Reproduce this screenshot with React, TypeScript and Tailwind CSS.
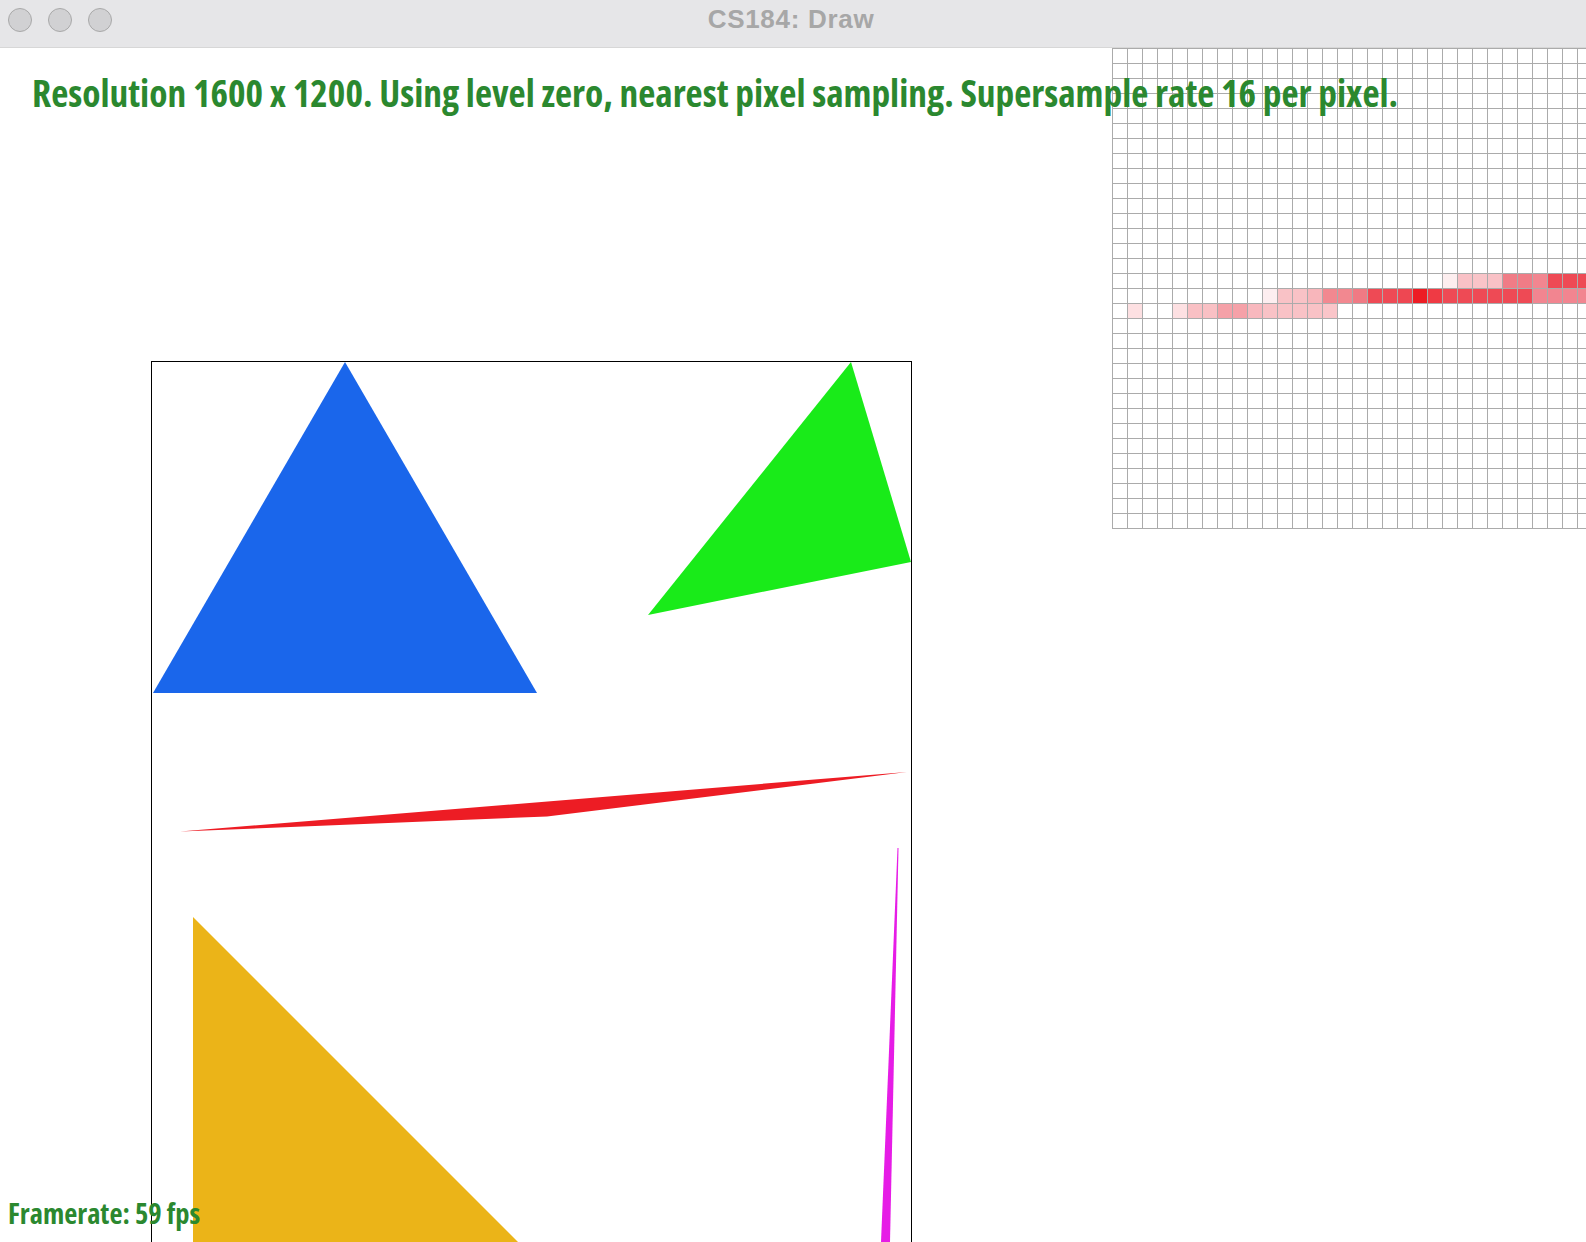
import React from 'react';

interface ZoomCell {
  row: number;
  col: number;
  color: string;
}

const CELL = 15;
const GRID_X = 1112;
const GRID_N = 32;

// samples shown in the zoomed pixel inspector (row, col, colour)
const zoomCells: ZoomCell[] = [
  { row: 15, col: 22, color: '#fdeeef' },
  { row: 15, col: 23, color: '#f9c1c6' },
  { row: 15, col: 24, color: '#f9c4c8' },
  { row: 15, col: 25, color: '#f9c1c6' },
  { row: 15, col: 26, color: '#f07c86' },
  { row: 15, col: 27, color: '#f07c86' },
  { row: 15, col: 28, color: '#f28690' },
  { row: 15, col: 29, color: '#ee4a55' },
  { row: 15, col: 30, color: '#ee4a55' },
  { row: 15, col: 31, color: '#ee4a55' },
  { row: 16, col: 10, color: '#fdeef0' },
  { row: 16, col: 11, color: '#f9c2c6' },
  { row: 16, col: 12, color: '#f9c2c6' },
  { row: 16, col: 13, color: '#f8b6bb' },
  { row: 16, col: 14, color: '#f28890' },
  { row: 16, col: 15, color: '#f28890' },
  { row: 16, col: 16, color: '#f07a84' },
  { row: 16, col: 17, color: '#ee4a55' },
  { row: 16, col: 18, color: '#ee4a55' },
  { row: 16, col: 19, color: '#ee4752' },
  { row: 16, col: 20, color: '#ed1c24' },
  { row: 16, col: 21, color: '#ef3a44' },
  { row: 16, col: 22, color: '#ee4a55' },
  { row: 16, col: 23, color: '#ee4a55' },
  { row: 16, col: 24, color: '#ee4a55' },
  { row: 16, col: 25, color: '#ee4a55' },
  { row: 16, col: 26, color: '#ee4a55' },
  { row: 16, col: 27, color: '#ee4a55' },
  { row: 16, col: 28, color: '#f28590' },
  { row: 16, col: 29, color: '#f28590' },
  { row: 16, col: 30, color: '#f28590' },
  { row: 16, col: 31, color: '#f28590' },
  { row: 17, col: 1, color: '#fde0e2' },
  { row: 17, col: 4, color: '#fde0e2' },
  { row: 17, col: 5, color: '#f9c0c4' },
  { row: 17, col: 6, color: '#f9c0c4' },
  { row: 17, col: 7, color: '#f5a1a8' },
  { row: 17, col: 8, color: '#f5a1a8' },
  { row: 17, col: 9, color: '#f8b8be' },
  { row: 17, col: 10, color: '#f9c2c6' },
  { row: 17, col: 11, color: '#f9c2c6' },
  { row: 17, col: 12, color: '#f9c2c6' },
  { row: 17, col: 13, color: '#f9c2c6' },
  { row: 17, col: 14, color: '#fac5c9' },
];

const TrafficLight = () => (
  <span className="block h-6 w-6 rounded-full border border-[#a9a9a9] bg-[#d1d1d3]" />
);

const DrawCanvas = () => {
  const lines = Array.from({ length: GRID_N + 1 }, (_, i) => i);
  return (
    <svg className="absolute inset-0" width={1586} height={1194} viewBox="0 0 1586 1194">
      {/* framebuffer outline */}
      <rect x={151.5} y={313.5} width={760} height={1000} fill="none" stroke="#000" strokeWidth={1} />

      <polygon points="345,314 153,645 537,645" fill="#1a66eb" />
      <polygon points="851,314 911,514 648,567" fill="#19eb19" />
      <polygon points="180,783.5 907,724 547,768.5" fill="#ed1c24" />
      <polygon points="193,869 193,1400 724,1400" fill="#ebb418" />
      <polygon points="897.5,800 898.5,800 890,1194 881,1194" fill="#e61ce6" />

      {/* zoom inspector */}
      <rect x={GRID_X} y={0} width={CELL * GRID_N} height={CELL * GRID_N} fill="#fff" />
      {zoomCells.map((c) => (
        <rect
          key={`${c.row}-${c.col}`}
          x={GRID_X + c.col * CELL}
          y={c.row * CELL}
          width={CELL}
          height={CELL}
          fill={c.color}
        />
      ))}
      {lines.map((i) => (
        <line
          key={`v${i}`}
          x1={GRID_X + i * CELL + 0.5}
          x2={GRID_X + i * CELL + 0.5}
          y1={0}
          y2={CELL * GRID_N + 0.5}
          stroke="#ababab"
          strokeWidth={1}
        />
      ))}
      {lines.map((i) => (
        <line
          key={`h${i}`}
          x1={GRID_X}
          x2={GRID_X + CELL * GRID_N}
          y1={i * CELL + 0.5}
          y2={i * CELL + 0.5}
          stroke="#ababab"
          strokeWidth={1}
        />
      ))}
    </svg>
  );
};

export default function App() {
  return (
    <div className="flex h-[1242px] w-[1586px] flex-col overflow-hidden bg-white">
      {/* window chrome */}
      <div className="grid h-12 shrink-0 grid-cols-[1fr_auto_1fr] items-start border-b border-[#d7d7d7] bg-[#e6e6e8]">
        <div className="flex gap-4 pl-2 pt-2">
          <TrafficLight />
          <TrafficLight />
          <TrafficLight />
        </div>
        <div className="pt-[6px] pr-[4px] font-['Liberation_Sans',Arial,sans-serif] text-[26px] leading-none font-bold tracking-[0.7px] text-[#a7a7a7]">
          CS184: Draw
        </div>
        <div />
      </div>

      <main className="relative flex-1 overflow-hidden">
        <DrawCanvas />
        <div className="relative flex h-full flex-col justify-between font-['Open_Sans','DejaVu_Sans_Condensed',sans-serif] font-bold font-stretch-condensed text-[#2b882f]">
          <h1 className="pl-[32px] pt-[26px] text-[37.4px] leading-none">
            Resolution 1600 x 1200. Using level zero, nearest pixel sampling. Supersample rate 16 per pixel.
          </h1>
          <p className="pb-[15px] pl-[8px] text-[28.5px] leading-none">Framerate: 59 fps</p>
        </div>
      </main>
    </div>
  );
}
